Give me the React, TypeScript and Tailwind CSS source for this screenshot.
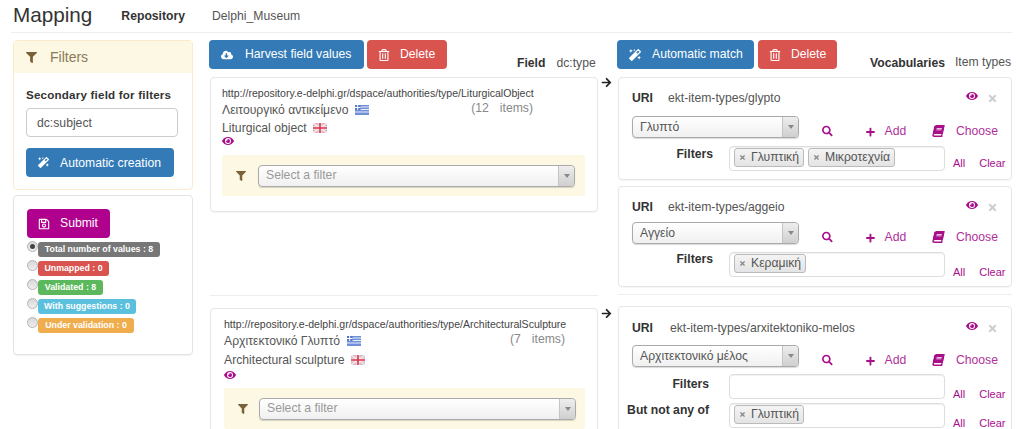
import type { ReactNode } from 'react';
import {
  FaArrowRight,
  FaBook,
  FaCloudDownloadAlt,
  FaEye,
  FaFilter,
  FaMagic,
  FaPlus,
  FaRegSave,
  FaRegTrashAlt,
  FaSearch,
  FaTimes,
} from 'react-icons/fa';

function GreekFlag() {
  return (
    <svg width="14" height="10" viewBox="0 0 14 10" className="inline-block shrink-0">
      <rect width="14" height="10" fill="#6f8fd8" />
      <path d="M0 2h14M0 4.5h14M0 7h14" stroke="#e8eefa" strokeWidth="1" />
      <rect width="5.5" height="5" fill="#5577c8" />
      <path d="M2.7 0v5M0 2.5h5.5" stroke="#fff" strokeWidth="1" />
    </svg>
  );
}

function UkFlag() {
  return (
    <svg width="14" height="10" viewBox="0 0 14 10" className="inline-block shrink-0">
      <rect width="14" height="10" fill="#d9b8c4" />
      <path d="M0 0l14 10M14 0L0 10" stroke="#f2e6ea" strokeWidth="1.5" />
      <path d="M7 0v10M0 5h14" stroke="#f4f0f2" strokeWidth="3" />
      <path d="M7 0v10M0 5h14" stroke="#e0304a" strokeWidth="1.6" />
    </svg>
  );
}

function Select({ value, placeholder, className }: { value?: string; placeholder?: string; className: string }) {
  return (
    <div
      className={`flex h-[22px] items-center rounded-[4px] border border-[#aaaaaa] bg-gradient-to-b from-white to-[#f0f0f0] shadow-[0_1px_1px_rgba(0,0,0,0.15)] ${className}`}
    >
      <span className={`flex-1 truncate pl-[7px] ${value ? 'text-[#555]' : 'text-[#999]'}`}>{value || placeholder}</span>
      <span className="flex h-full w-[16px] items-center justify-center rounded-r-[4px] border-l border-[#c4c4c4] bg-gradient-to-b from-[#eeeeee] to-[#cfcfcf]">
        <span className="h-0 w-0 border-x-[3px] border-t-[4px] border-x-transparent border-t-[#888]" />
      </span>
    </div>
  );
}

function Btn({
  color,
  icon,
  label,
  className,
  iconClass = 'w-[36px]',
}: {
  color: string;
  icon: ReactNode;
  label: string;
  className: string;
  iconClass?: string;
}) {
  return (
    <div className={`flex h-[29px] items-center rounded-[4px] text-white ${color} ${className}`}>
      <span className={`flex shrink-0 justify-center text-[12px] ${iconClass}`}>{icon}</span>
      <span>{label}</span>
    </div>
  );
}

function Stat({ color, label, checked, width }: { color: string; label: string; checked?: boolean; width: string }) {
  return (
    <div className="flex h-[19px] items-start">
      <span className="flex h-[11px] w-[11px] shrink-0 items-center justify-center rounded-full border border-[#b5b5b5] bg-gradient-to-b from-[#d8d8d8] to-[#eeeeee]">
        {checked && <span className="h-[5px] w-[5px] rounded-full bg-[#444]" />}
      </span>
      <span
        className={`mt-[1px] flex h-[15px] items-center justify-center rounded-[3px] text-[8.8px] font-bold text-white ${color} ${width}`}
      >
        {label}
      </span>
    </div>
  );
}

function Tag({ label }: { label: string }) {
  return (
    <span className="flex h-[19px] items-center gap-[5px] rounded-[3px] border border-[#bbbbbb] bg-gradient-to-b from-[#f4f4f4] to-[#e4e4e4] px-[4px] text-[#555]">
      <FaTimes className="text-[7px] text-[#888]" />
      {label}
    </span>
  );
}

function FilterRow({
  label,
  tags,
  className,
  labelClass,
  linksClass = 'mt-[12px]',
}: {
  label: string;
  tags: string[];
  className: string;
  labelClass: string;
  linksClass?: string;
}) {
  return (
    <div className={`flex h-[25px] items-start ${className}`}>
      <div className={`flex w-[97px] shrink-0 justify-end font-bold whitespace-nowrap text-[#333] ${labelClass}`}>{label}</div>
      <div className="flex h-[25px] w-[216px] shrink-0 items-start gap-[4px] rounded-[4px] border border-[#dddddd] bg-white px-[4px] pt-[1px] shadow-[inset_0_1px_1px_rgba(0,0,0,0.06)]">
        {tags.map((t) => (
          <Tag key={t} label={t} />
        ))}
      </div>
      <div className={`ml-[8px] flex shrink-0 gap-[14px] text-[11px] text-[#a8108a] ${linksClass}`}>
        <span>All</span>
        <span>Clear</span>
      </div>
    </div>
  );
}

function ActionRow({ value, className }: { value: string; className: string }) {
  return (
    <div className={`flex items-end text-[#a8108a] ${className}`}>
      <Select value={value} className="w-[167px] shrink-0" />
      <FaSearch className="ml-[23px] mb-[1px] text-[12px]" />
      <FaPlus className="ml-[33px] mb-[1px] text-[10px]" />
      <span className="ml-[10px] -mb-[2px] text-[#b0309a]">Add</span>
      <FaBook className="ml-[27px] mb-[1px] -skew-x-12 text-[12px]" />
      <span className="ml-[12px] -mb-[2px] text-[#b0309a]">Choose</span>
    </div>
  );
}

function UriRow({ uri, labelClass = 'w-[36px]' }: { uri: string; labelClass?: string }) {
  return (
    <div className="flex h-[16px] items-center">
      <span className={`font-bold text-[#333] ${labelClass}`}>URI</span>
      <span className="flex-1 text-[#555]">{uri}</span>
      <FaEye className="mb-[5px] text-[12px] text-[#a8108a]" />
      <FaTimes className="ml-[9px] text-[11px] text-[#cccccc]" />
    </div>
  );
}

function ValueCard({
  url,
  greek,
  english,
  count,
  className,
  countClass,
  selectClass,
  compact,
}: {
  url: string;
  greek: string;
  english: string;
  count: string;
  className: string;
  countClass: string;
  selectClass: string;
  compact?: boolean;
}) {
  return (
    <div className={`rounded-[4px] border border-[#e6e6e6] pt-[8px] pr-[12px] shadow-[0_1px_1px_rgba(0,0,0,0.04)] ${className}`}>
      <div className="text-[10.55px] leading-[14px] text-[#444]">{url}</div>
      <div className="mt-[1px] flex h-[18px] items-center gap-[7px] text-[#555]">
        {greek} <GreekFlag />
        <span className={`ml-auto -mt-[3px] flex gap-[11px] text-[#888] ${countClass}`}>
          <span>({count}</span>
          <span>items)</span>
        </span>
      </div>
      <div className={`flex h-[18px] items-center gap-[6px] text-[#555] ${compact ? '' : 'mt-[1px]'}`}>
        {english} <UkFlag />
      </div>
      <FaEye className={`text-[12px] text-[#a8108a] ${compact ? '-mt-[2px]' : ''}`} />
      <div className={`flex h-[41px] items-center rounded-[2px] bg-[#fcf8e3] pl-[14px] ${compact ? 'mt-[8px]' : 'mt-[7px]'}`}>
        <FaFilter className="text-[10px] text-[#7a6238]" />
        <Select placeholder="Select a filter" className={`w-[317px] ${selectClass}`} />
      </div>
    </div>
  );
}

export default function App() {
  return (
    <div className="h-[429px] w-[1023px] overflow-hidden bg-white text-[12.2px] font-['Liberation_Sans',Arial,sans-serif] text-[#555]">
      <div className="mx-[11px] flex h-[33px] items-center border-b border-[#eeeeee]">
        <span className="ml-[2px] -mt-[2px] text-[20.7px] leading-none text-[#333]">Mapping</span>
        <span className="ml-[29px] mt-[1px] font-bold text-[#333]">Repository</span>
        <span className="ml-[27px] mt-[1px] text-[#555]">Delphi_Museum</span>
      </div>

      <div className="mt-[7px] ml-[13px] flex items-start">
        <div className="w-[180px] shrink-0">
          <div className="h-[150px] rounded-[4px] border border-[#faebcc]">
            <div className="flex h-[32px] items-center bg-[#fcf8e3] pl-[12px] text-[14px] text-[#8a7a5a]">
              <FaFilter className="text-[11px] text-[#7a6238]" />
              <span className="ml-[13px]">Filters</span>
            </div>
            <div className="px-[12px]">
              <div className="mt-[13px] text-[11.6px] font-bold tracking-[0.2px] text-[#333]">Secondary field for filters</div>
              <div className="mt-[5px] flex h-[29px] w-[152px] items-center rounded-[4px] border border-[#cccccc] pl-[10px] text-[#555]">
                dc:subject
              </div>
              <div className="mt-[11px] flex h-[29px] w-[148px] items-center rounded-[4px] bg-[#337ab7] text-white">
                <span className="flex w-[34px] justify-center text-[11px]">
                  <FaMagic />
                </span>
                Automatic creation
              </div>
            </div>
          </div>
          <div className="mt-[5px] h-[160px] rounded-[4px] border border-[#e3e3e3] pt-[13px] pl-[13px] shadow-[0_1px_1px_rgba(0,0,0,0.05)]">
            <Btn color="bg-[#b0008e]" icon={<FaRegSave />} label="Submit" className="w-[83px]" iconClass="w-[33px]" />
            <div className="mt-[3px]">
              <Stat color="bg-[#777777]" label="Total number of values : 8" checked width="w-[122px]" />
              <Stat color="bg-[#d9534f]" label="Unmapped : 0" width="w-[71px]" />
              <Stat color="bg-[#5cb85c]" label="Validated : 8" width="w-[65px]" />
              <Stat color="bg-[#5bc0de]" label="With suggestions : 0" width="w-[98px]" />
              <Stat color="bg-[#f0ad4e]" label="Under validation : 0" width="w-[96px]" />
            </div>
          </div>
        </div>

        <div className="ml-[16px] w-[389px] shrink-0">
          <div className="flex h-[29px] items-start">
            <Btn color="bg-[#337ab7]" icon={<FaCloudDownloadAlt />} label="Harvest field values" className="w-[155px]" />
            <Btn color="bg-[#d9534f]" icon={<FaRegTrashAlt />} label="Delete" className="ml-[3px] w-[80px]" iconClass="w-[33px]" />
            <span className="mt-[14px] ml-[70px] font-bold text-[#333]">Field</span>
            <span className="mt-[14px] ml-[11px] text-[#555]">dc:type</span>
          </div>
          <ValueCard
            url="http://repository.e-delphi.gr/dspace/authorities/type/LiturgicalObject"
            greek="Λειτουργικό αντικείμενο"
            english="Liturgical object"
            count="12"
            countClass="mr-[52px]"
            selectClass="ml-[12px]"
            compact
            className="mt-[8px] ml-[1px] h-[135px] pl-[11px]"
          />
          <div className="mt-[83px] ml-[1px] border-t border-[#eeeeee]" />
          <ValueCard
            url="http://repository.e-delphi.gr/dspace/authorities/type/ArchitecturalSculpture"
            greek="Αρχιτεκτονικό Γλυπτό"
            english="Architectural sculpture"
            count="7"
            countClass="mr-[20px]"
            selectClass="ml-[11px]"
            className="mt-[12px] ml-[1px] h-[136px] pl-[13px]"
          />
        </div>

        <div className="ml-[3px] w-[16px] shrink-0 pt-[37px]">
          <FaArrowRight className="text-[11px] text-[#222]" />
          <FaArrowRight className="mt-[220px] text-[11px] text-[#222]" />
        </div>

        <div className="w-[395px] shrink-0">
          <div className="flex h-[29px] items-start">
            <Btn color="bg-[#337ab7]" icon={<FaMagic />} label="Automatic match" className="w-[137px]" iconClass="w-[35px]" />
            <Btn color="bg-[#d9534f]" icon={<FaRegTrashAlt />} label="Delete" className="ml-[4px] w-[79px]" iconClass="w-[33px]" />
            <span className="mt-[14px] ml-[33px] font-bold text-[#333]">Vocabularies</span>
            <span className="mt-[13px] ml-[10px] text-[#555]">Item types</span>
          </div>

          <div className="mt-[8px] ml-[1px] h-[103px] rounded-[4px] border border-[#e6e6e6] pt-[12px] pr-[13px] pl-[13px] shadow-[0_1px_1px_rgba(0,0,0,0.04)]">
            <UriRow uri="ekt-item-types/glypto" />
            <ActionRow value="Γλυπτό" className="mt-[10px]" />
            <FilterRow
              label="Filters"
              tags={['Γλυπτική', 'Μικροτεχνία']}
              className="mt-[8px]"
              labelClass="pr-[16px] -mt-[1px]"
              linksClass="mt-[9px]"
            />
          </div>

          <div className="mt-[6px] ml-[1px] h-[101px] rounded-[4px] border border-[#e6e6e6] pt-[12px] pr-[13px] pl-[13px] shadow-[0_1px_1px_rgba(0,0,0,0.04)]">
            <UriRow uri="ekt-item-types/aggeio" />
            <ActionRow value="Αγγείο" className="mt-[7px]" />
            <FilterRow label="Filters" tags={['Κεραμική']} className="mt-[8px]" labelClass="pr-[16px] -mt-[2px]" />
          </div>

          <div className="mt-[7px] ml-[1px] border-t border-[#eeeeee]" />

          <div className="mt-[11px] ml-[1px] h-[130px] rounded-[4px] border border-[#e6e6e6] pt-[13px] pr-[13px] pl-[13px] shadow-[0_1px_1px_rgba(0,0,0,0.04)]">
            <UriRow uri="ekt-item-types/arxitektoniko-melos" labelClass="w-[38px]" />
            <ActionRow value="Αρχιτεκτονικό μέλος" className="mt-[9px]" />
            <FilterRow label="Filters" tags={[]} className="mt-[7px]" labelClass="pr-[20px] mt-[1px]" />
            <FilterRow label="But not any of" tags={['Γλυπτική']} className="mt-[4px]" labelClass="pr-[20px] -mt-[2px]" />
          </div>
        </div>
      </div>
    </div>
  );
}
